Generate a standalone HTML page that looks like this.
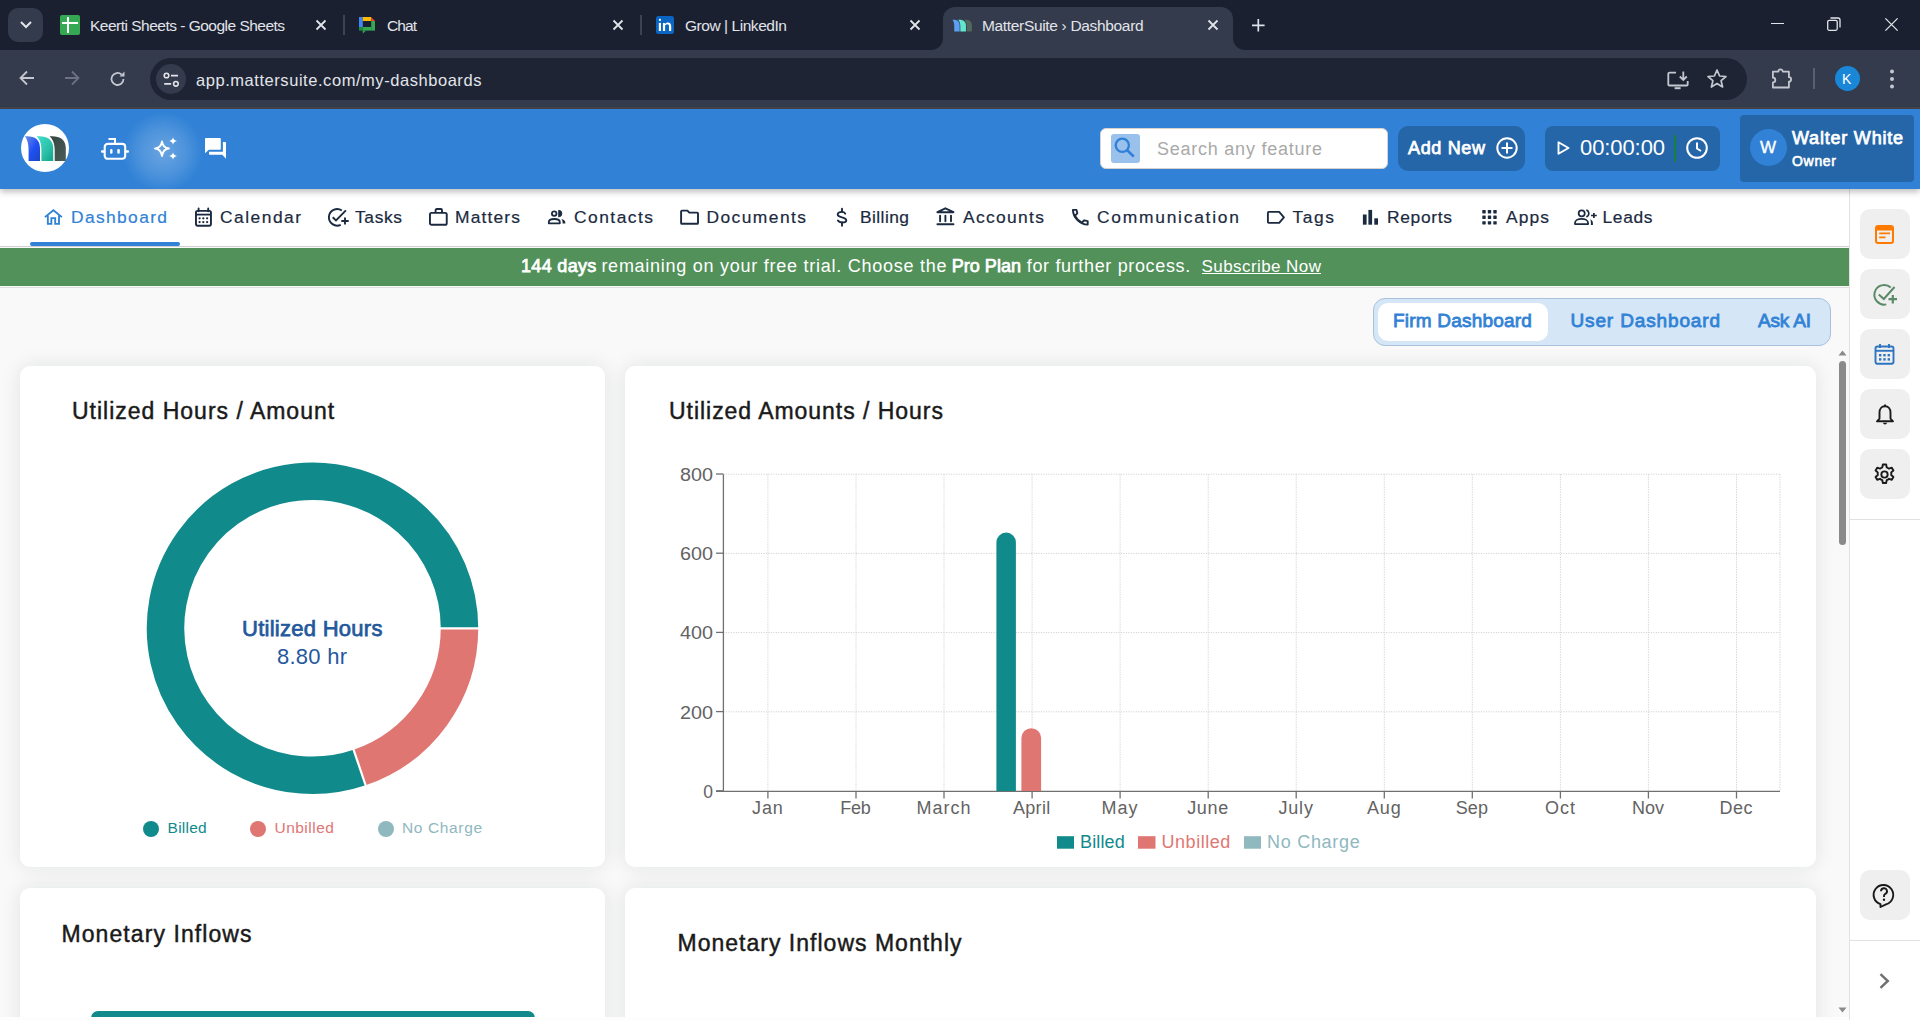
<!DOCTYPE html>
<html><head><meta charset="utf-8">
<style>
*{margin:0;padding:0;box-sizing:border-box}
html,body{width:1920px;height:1020px;overflow:hidden;background:#f9f9f9;font-family:"Liberation Sans",sans-serif}
.a{position:absolute}
.t{position:absolute;white-space:nowrap;line-height:1}
svg{position:absolute;overflow:visible}
#strip{left:0;top:0;width:1920px;height:50px;background:#1a2030}
#toolbar{left:0;top:50px;width:1920px;height:60px;background:#333b4c}
#url{left:150px;top:58px;width:1597px;height:42px;border-radius:21px;background:#1e2434}
.ct{color:#e2e4ea;font-size:15.5px}
</style></head><body>
<!-- ============ CHROME TAB STRIP ============ -->
<div id="strip" class="a"></div>
<div class="a" style="left:8px;top:8px;width:35px;height:34px;border-radius:10px;background:#333b4c"></div>
<svg style="left:19px;top:20px" width="14" height="10"><path d="M2 2 L7 7 L12 2" stroke="#e2e4ea" stroke-width="2" fill="none"/></svg>

<!-- tab1 -->
<div class="a" style="left:60px;top:15px;width:20px;height:20px;border-radius:2px;background:#34a853"></div>
<div class="a" style="left:62.4px;top:22px;width:15.2px;height:2.1px;background:#fff"></div>
<div class="a" style="left:67.2px;top:17.3px;width:2px;height:15.3px;background:#fff"></div>
<div class="t ct" style="--w:195;letter-spacing:-0.51px;left:90px;top:18px">Keerti Sheets - Google Sheets</div>
<svg style="left:315.5px;top:20px" width="10" height="10"><path d="M0.5 0.5L9.5 9.5M9.5 0.5L0.5 9.5" stroke="#e2e4ea" stroke-width="1.8"/></svg>
<div class="a" style="left:343px;top:15px;width:2px;height:20px;background:#3c4454"></div>

<!-- tab2 chat -->
<svg style="left:359px;top:17px" width="17" height="17" viewBox="0 0 17 17"><rect x="0" y="0" width="3.8" height="10" fill="#4285f4"/><rect x="0" y="10" width="3.8" height="3.6" fill="#1e8e3e"/><rect x="3.8" y="0" width="8.4" height="4" fill="#fbbc04"/><path d="M12.2 0L16 4H12.2z" fill="#ea4335"/><rect x="12.2" y="4" width="3.8" height="9.6" fill="#34a853"/><rect x="3.8" y="10" width="8.4" height="3.6" fill="#34a853"/><path d="M3.6 13.5L3.9 16.6L7 13.5z" fill="#34a853"/></svg>
<div class="t ct" style="--w:30;letter-spacing:-0.92px;left:387px;top:18px">Chat</div>
<svg style="left:612.5px;top:20px" width="10" height="10"><path d="M0.5 0.5L9.5 9.5M9.5 0.5L0.5 9.5" stroke="#e2e4ea" stroke-width="1.8"/></svg>
<div class="a" style="left:640px;top:15px;width:2px;height:20px;background:#3c4454"></div>

<!-- tab3 linkedin -->
<div class="a" style="left:656px;top:16px;width:18px;height:18px;border-radius:2.5px;background:#0a66c2"></div>
<svg style="left:656px;top:16px" width="18" height="18" viewBox="0 0 18 18"><rect x="2.8" y="2.8" width="2.2" height="2.3" rx="1" fill="#fff"/><rect x="2.8" y="6.9" width="2.2" height="8.1" fill="#fff"/><path d="M6.9 15V6.9H9V8C9.6 7 10.6 6.4 12 6.4C14 6.4 15.2 7.6 15.2 10V15H13V10.4C13 9 12.4 8.3 11.2 8.3C9.9 8.3 9.1 9.2 9.1 10.6V15z" fill="#fff"/></svg>
<div class="t ct" style="--w:102;letter-spacing:-0.45px;left:685px;top:18px">Grow | LinkedIn</div>
<svg style="left:909.5px;top:20px" width="10" height="10"><path d="M0.5 0.5L9.5 9.5M9.5 0.5L0.5 9.5" stroke="#e2e4ea" stroke-width="1.8"/></svg>

<!-- active tab -->
<div class="a" style="left:943px;top:7px;width:290px;height:50px;border-radius:12px 12px 0 0;background:#333b4c"></div>
<div class="a" style="left:931px;top:38px;width:12px;height:12px;background:#333b4c"></div>
<div class="a" style="left:919px;top:26px;width:24px;height:24px;border-radius:12px;background:#1a2030"></div>
<div class="a" style="left:1233px;top:38px;width:12px;height:12px;background:#333b4c"></div>
<div class="a" style="left:1233px;top:26px;width:24px;height:24px;border-radius:12px;background:#1a2030"></div>
<svg style="left:0;top:0" width="1000" height="40" viewBox="0 0 1000 40"><g transform="translate(952.4 19.6) scale(0.475) translate(-24.7 -136)">
<path d="M24.7 136.3 C34 135.5 40 139 40 148 V161 H28.6 V150 C28.6 143 27 139 24.7 136.3z" fill="#5c9ff2"/>
<path d="M36.5 136.3 C46 135.5 53.2 139 53.2 148 V161 H41.4 V150 C41.4 143 39.5 139 36.5 136.3z" fill="#62e6cf"/>
<path d="M49.5 136.3 C59 135.5 65.8 139 65.8 148 V161 H54.7 V150 C54.7 143 52.5 139 49.5 136.3z" fill="#50685f"/></g></svg>
<div class="t ct" style="--w:161.6;letter-spacing:-0.33px;left:982px;top:18px">MatterSuite › Dashboard</div>
<svg style="left:1207.5px;top:20px" width="10" height="10"><path d="M0.5 0.5L9.5 9.5M9.5 0.5L0.5 9.5" stroke="#e2e4ea" stroke-width="1.8"/></svg>
<svg style="left:1251.8px;top:18.8px" width="12.6" height="12.6"><path d="M6.3 0v12.6M0 6.3h12.6" stroke="#dde1ec" stroke-width="1.7"/></svg>

<!-- window controls -->
<div class="a" style="left:1771px;top:22.9px;width:13px;height:1.3px;background:#e2e4ea"></div>
<svg style="left:1826.8px;top:17.2px" width="14" height="14"><rect x="0.7" y="3.3" width="9.5" height="10" rx="1.5" stroke="#e2e4ea" stroke-width="1.3" fill="none"/><path d="M3.5 1h7.5a2 2 0 0 1 2 2v7.5" stroke="#e2e4ea" stroke-width="1.3" fill="none"/></svg>
<svg style="left:1884.7px;top:17.9px" width="13" height="13"><path d="M0.4 0.4L12.6 12.6M12.6 0.4L0.4 12.6" stroke="#e2e4ea" stroke-width="1.3"/></svg>

<!-- ============ TOOLBAR ============ -->
<div id="toolbar" class="a"></div>
<div id="url" class="a"></div>
<div class="a" style="left:0;top:107.2px;width:1920px;height:1.8px;background:#454548"></div>
<svg style="left:19px;top:70px" width="16" height="16"><path d="M15 8H2M8 1.5L1.5 8L8 14.5" stroke="#c4c7cf" stroke-width="1.8" fill="none"/></svg>
<svg style="left:64px;top:70px" width="16" height="16"><path d="M1 8H14M8 1.5L14.5 8L8 14.5" stroke="#6c7282" stroke-width="1.8" fill="none"/></svg>
<svg style="left:110px;top:71px" width="16" height="16"><path d="M13.5 8A6 6 0 1 1 11.5 3.5" stroke="#c4c7cf" stroke-width="1.8" fill="none"/><path d="M14.5 0.5v5h-5z" fill="#c4c7cf"/></svg>
<div class="a" style="left:156px;top:64px;width:30px;height:30px;border-radius:15px;background:#333b4c"></div>
<svg style="left:163px;top:71.6px" width="18" height="16"><circle cx="3.5" cy="3.5" r="2.3" stroke="#e2e4ea" stroke-width="1.6" fill="none"/><path d="M8 3.6h7M1.2 11.8h7" stroke="#e2e4ea" stroke-width="1.7"/><circle cx="12.9" cy="11.8" r="2.3" stroke="#e2e4ea" stroke-width="1.6" fill="none"/></svg>
<div class="t" style="--w:285.5;letter-spacing:0.55px;left:196px;top:71.7px;font-size:16.5px;color:#e2e4ea">app.mattersuite.com/my-dashboards</div>

<!-- right toolbar icons -->
<svg style="left:1666px;top:68px" width="24" height="22" viewBox="0 0 24 22"><path d="M10 4.6H3.5Q2.3 4.6 2.3 5.8V16.4Q2.3 17.5 3.5 17.5H20.6Q21.7 17.5 21.7 16.4V13" stroke="#c4c7cf" stroke-width="1.8" fill="none"/><path d="M8.6 20.2H14.6" stroke="#c4c7cf" stroke-width="2"/><path d="M17.3 3.5V11.8M13.8 8.5L17.3 12L20.8 8.5" stroke="#c4c7cf" stroke-width="1.8" fill="none"/></svg>
<svg style="left:1706px;top:68px" width="22" height="22"><path d="M11 2l2.6 6 6.4.5-4.9 4.2 1.5 6.3L11 15.6 5.4 19l1.5-6.3L2 8.5 8.4 8z" stroke="#c4c7cf" stroke-width="1.7" fill="none" stroke-linejoin="round"/></svg>
<svg style="left:1770px;top:67px" width="24" height="23" viewBox="0 0 24 23"><path d="M2.9 4.6H8.4A2.2 2.2 0 0 1 12.8 4.6H18.9V10.2A2.2 2.2 0 0 1 18.9 14.6V20.5H2.9V15.5A2.4 2.4 0 0 0 2.9 10.7z" stroke="#c4c7cf" stroke-width="1.8" fill="none" stroke-linejoin="round"/></svg>
<div class="a" style="left:1813px;top:68px;width:1.5px;height:21px;background:#5a6070"></div>
<div class="a" style="left:1835px;top:66px;width:25px;height:25px;border-radius:13px;background:#1a86d8"></div>
<div class="t" style="left:1842px;top:72px;font-size:14px;color:#fff">K</div>
<svg style="left:1889px;top:69px" width="6" height="20"><circle cx="3" cy="2.5" r="2" fill="#c4c7cf"/><circle cx="3" cy="10" r="2" fill="#c4c7cf"/><circle cx="3" cy="17.5" r="2" fill="#c4c7cf"/></svg>

<!-- ============ APP HEADER ============ -->
<div class="a" style="left:0;top:109px;width:1920px;height:80px;background:#3182d6;box-shadow:0 3px 6px rgba(0,0,0,0.25);z-index:2"></div>
<div class="a" style="z-index:3;left:0;top:0;width:0;height:0">
<!-- logo -->
<div class="a" style="left:21px;top:124px;width:48px;height:48px;border-radius:24px;background:#fff"></div>
<svg style="left:0;top:0" width="90" height="180" viewBox="0 0 90 180">
<defs>
<linearGradient id="lg1" x1="0" y1="0" x2="1" y2="1"><stop offset="0" stop-color="#6f8fe0"/><stop offset="0.55" stop-color="#1f4ff5"/><stop offset="1" stop-color="#1b48c0"/></linearGradient>
<linearGradient id="lg2" x1="0" y1="0" x2="1" y2="1"><stop offset="0" stop-color="#40e0cc"/><stop offset="0.6" stop-color="#2cc0a8"/><stop offset="1" stop-color="#12a088"/></linearGradient>
<linearGradient id="lg3" x1="0" y1="0" x2="1" y2="1"><stop offset="0" stop-color="#34443f"/><stop offset="1" stop-color="#4c5c58"/></linearGradient>
</defs>
<path d="M24.7 136.3 C34 135.5 40 139 40 148 V161 H28.6 V150 C28.6 143 27 139 24.7 136.3z" fill="url(#lg1)"/>
<path d="M36.5 136.3 C46 135.5 53.2 139 53.2 148 V161 H41.4 V150 C41.4 143 39.5 139 36.5 136.3z" fill="url(#lg2)"/>
<path d="M49.5 136.3 C59 135.5 65.8 139 65.8 148 V161 H54.7 V150 C54.7 143 52.5 139 49.5 136.3z" fill="url(#lg3)"/>
</svg>
<!-- robot -->
<svg style="left:101px;top:137px" width="28" height="24" viewBox="0 0 28 24"><rect x="3.7" y="6.9" width="20.5" height="14.9" rx="3" stroke="#fff" stroke-width="2.1" fill="none"/><path d="M8.2 2.1H14V6" stroke="#fff" stroke-width="2" fill="none" stroke-linecap="round"/><path d="M1.2 14.5h1.8M25 14.5h1.8" stroke="#fff" stroke-width="2.6" stroke-linecap="round"/><rect x="9.1" y="12" width="2.4" height="4.8" rx="1.2" fill="#fff"/><rect x="16.3" y="12" width="2.5" height="4.8" rx="1.2" fill="#fff"/></svg>
<!-- sparkle glow -->
<div class="a" style="left:123px;top:112px;width:80px;height:80px;border-radius:40px;background:radial-gradient(circle,rgba(255,255,255,0.27) 0%,rgba(255,255,255,0.14) 40%,rgba(255,255,255,0) 70%)"></div>
<svg style="left:154px;top:137px" width="24" height="24" viewBox="0 0 24 24"><path d="M8 4.5 Q9 11 15 11.5 Q9 12 8 19 Q7 12 1 11.5 Q7 11 8 4.5z" stroke="#fff" stroke-width="1.8" fill="none" stroke-linejoin="round"/><path d="M19 0.2 Q19.6 3.4 23 4 Q19.6 4.6 19 7.8 Q18.4 4.6 15 4 Q18.4 3.4 19 0.2z" fill="#fff"/><path d="M19 15.2 Q19.6 18.4 23 19 Q19.6 19.6 19 22.8 Q18.4 19.6 15 19 Q18.4 18.4 19 15.2z" fill="#fff"/></svg>
<!-- chat -->
<svg style="left:204px;top:138px" width="23" height="22" viewBox="0 0 23 22"><path d="M1 0.9Q1 0.1 1.8 0.1H16Q16.8 0.1 16.8 0.9V10.9Q16.8 11.7 16 11.7H4.8L1 15.3z" fill="#fff"/><path d="M18.9 4H21.2Q22 4 22 4.8V20.8L18.2 16.7H5.8Q5 16.7 5 15.9V13.8H18.9z" fill="#fff"/></svg>

<!-- search -->
<div class="a" style="left:1100px;top:128px;width:288px;height:40.7px;border-radius:6px;background:#fff;border:1px solid #d8d2cc"></div>
<div class="a" style="left:1111px;top:134px;width:29px;height:29px;border-radius:3px;background:#99c1eb"></div>
<svg style="left:1114px;top:137px" width="22" height="22" viewBox="0 0 22 22"><circle cx="8.3" cy="8.3" r="6.6" stroke="#2e80d8" stroke-width="2.3" fill="none"/><path d="M13.2 13.2L19.8 19.6" stroke="#2e80d8" stroke-width="2.7"/></svg>
<div class="t" style="--w:165;letter-spacing:0.76px;left:1157px;top:140px;font-size:18px;color:#a9a9a9">Search any feature</div>

<!-- add new -->
<div class="a" style="left:1398px;top:126px;width:127px;height:45px;border-radius:10px;background:#2566a8"></div>
<div class="t" style="--w:77;letter-spacing:0.66px;left:1408px;top:139px;font-size:18px;color:#fff;-webkit-text-stroke:0.75px #fff">Add New</div>
<svg style="left:1496px;top:137px" width="22" height="22" viewBox="0 0 22 22"><circle cx="11" cy="11" r="9.7" stroke="#fff" stroke-width="2" fill="none"/><path d="M11 5.5v11M5.5 11h11" stroke="#fff" stroke-width="2"/></svg>

<!-- timer -->
<div class="a" style="left:1545px;top:126px;width:175px;height:45px;border-radius:8px;background:#2566a8"></div>
<svg style="left:1557px;top:141px" width="13" height="14" viewBox="0 0 13 14"><path d="M1.5 1.2L11.5 7L1.5 12.8z" stroke="#fff" stroke-width="1.9" fill="none" stroke-linejoin="round"/></svg>
<div class="t" style="--w:85;letter-spacing:-0.09px;left:1580px;top:137px;font-size:22px;color:#fff">00:00:00</div>
<div class="a" style="left:1674px;top:135px;width:1.5px;height:27px;background:#17803a"></div>
<svg style="left:1686px;top:137px" width="22" height="22" viewBox="0 0 22 22"><circle cx="11" cy="11" r="9.8" stroke="#fff" stroke-width="2" fill="none"/><path d="M11 5.5V11.5l4 2.5" stroke="#fff" stroke-width="2" fill="none"/></svg>

<!-- user -->
<div class="a" style="left:1740px;top:115px;width:174px;height:67px;border-radius:4px;background:#2566a8"></div>
<div class="a" style="left:1750px;top:129px;width:37px;height:37px;border-radius:19px;background:#3182d6"></div>
<div class="t" style="--w:16.3;letter-spacing:0.25px;left:1760px;top:139px;font-size:17px;color:#fff;-webkit-text-stroke:0.4px #fff">W</div>
<div class="t" style="--w:111;letter-spacing:0.79px;left:1792px;top:129px;font-size:18px;color:#fff;-webkit-text-stroke:0.75px #fff">Walter White</div>
<div class="t" style="--w:44;letter-spacing:0.69px;left:1792px;top:154px;font-size:14px;color:#fff;-webkit-text-stroke:0.6px #fff">Owner</div>
</div>

<!-- ============ NAV ============ -->
<div class="a" style="left:0;top:189px;width:1849px;height:58px;background:#fff;border-bottom:1.5px solid #d0d0d0"></div>
<div class="a" style="left:30px;top:242px;width:150px;height:3.5px;border-radius:2px;background:#3182d6"></div>
<!-- home -->
<svg style="left:44px;top:209px" width="19" height="17" viewBox="0 0 19 17"><path d="M0.9 8.1L9.4 1.2L17.9 8.1M3.85 6.6V14.8H7.35V9.15H11.2V14.8H15V6.6" stroke="#3182d6" stroke-width="1.85" fill="none" stroke-linejoin="miter"/></svg>
<div class="t" style="--w:96;letter-spacing:1.37px;left:71px;top:208.5px;font-size:17.4px;color:#3182d6;-webkit-text-stroke:0.2px #3182d6">Dashboard</div>
<!-- calendar -->
<svg style="left:194px;top:208px" width="19" height="19" viewBox="0 0 19 19"><rect x="1.95" y="2.9" width="15" height="14.8" rx="1.6" stroke="#1b2a40" stroke-width="1.9" fill="none"/><path d="M1.95 6.6H16.95" stroke="#1b2a40" stroke-width="1.8"/><path d="M4.6 0.4V3.2M14.2 0.4V3.2" stroke="#1b2a40" stroke-width="1.9" stroke-linecap="round"/><g fill="#1b2a40"><circle cx="5.6" cy="10.3" r="1.15"/><circle cx="9.3" cy="10.3" r="1.15"/><circle cx="13.1" cy="10.3" r="1.15"/><circle cx="5.6" cy="14.1" r="1.15"/><circle cx="9.3" cy="14.1" r="1.15"/><circle cx="13.1" cy="14.1" r="1.15"/></g></svg>
<div class="t" style="--w:81;letter-spacing:1.49px;left:220px;top:208.5px;font-size:17.4px;color:#1b2a40;-webkit-text-stroke:0.2px #1b2a40">Calendar</div>
<!-- tasks -->
<svg style="left:327px;top:208px" width="23" height="19" viewBox="0 0 23 19"><path d="M14.84 2.42A8.3 8.3 0 1 0 13.71 16.82" stroke="#1b2a40" stroke-width="1.9" fill="none"/><path d="M5.7 9.2L9 12.4L18.9 2.4" stroke="#1b2a40" stroke-width="1.9" fill="none"/><path d="M18 9.4v7.2M14.3 13h7.4" stroke="#1b2a40" stroke-width="1.9"/></svg>
<div class="t" style="--w:47;letter-spacing:0.64px;left:355px;top:208.5px;font-size:17.4px;color:#1b2a40;-webkit-text-stroke:0.2px #1b2a40">Tasks</div>
<!-- matters -->
<svg style="left:428px;top:208px" width="21" height="19" viewBox="0 0 21 19"><rect x="1.95" y="4.85" width="16.8" height="11.9" rx="1.6" stroke="#1b2a40" stroke-width="1.9" fill="none"/><path d="M7.6 4.85V2.3Q7.6 1.05 8.8 1.05H12.8Q14 1.05 14 2.3V4.85" stroke="#1b2a40" stroke-width="1.9" fill="none"/></svg>
<div class="t" style="--w:65;letter-spacing:1.17px;left:455px;top:208.5px;font-size:17.4px;color:#1b2a40;-webkit-text-stroke:0.2px #1b2a40">Matters</div>
<!-- contacts -->
<svg style="left:547px;top:209px" width="20" height="16" viewBox="0 0 20 16"><circle cx="7.2" cy="4.6" r="2.3" stroke="#1b2a40" stroke-width="1.8" fill="none"/><path d="M11.6 1.3A3.3 3.3 0 0 1 11.6 7.9z" fill="#1b2a40" stroke="#1b2a40" stroke-width="0.8"/><path d="M1.8 14.3V13.3C1.8 10.9 4.6 10 7.3 10S12.8 10.9 12.8 13.3V14.3z" stroke="#1b2a40" stroke-width="1.8" fill="none" stroke-linejoin="round"/><path d="M14.4 10.1C16.7 10.6 18.3 11.8 18.3 13.4V14.6H15.6V13.4C15.6 12 15.2 10.9 14.4 10.1z" fill="#1b2a40"/></svg>
<div class="t" style="--w:79;letter-spacing:1.48px;left:574px;top:208.5px;font-size:17.4px;color:#1b2a40;-webkit-text-stroke:0.2px #1b2a40">Contacts</div>
<!-- documents -->
<svg style="left:680px;top:209px" width="20" height="17" viewBox="0 0 20 17"><path d="M2 1.6H7.4L9.3 3.6H17.1Q18 3.6 18 4.5V13.9Q18 14.8 17.1 14.8H2Q1.1 14.8 1.1 13.9V2.5Q1.1 1.6 2 1.6z" stroke="#1b2a40" stroke-width="1.9" fill="none" stroke-linejoin="round"/></svg>
<div class="t" style="--w:99.5;letter-spacing:1.44px;left:706.5px;top:208.5px;font-size:17.4px;color:#1b2a40;-webkit-text-stroke:0.2px #1b2a40">Documents</div>
<!-- billing -->
<svg style="left:835px;top:207px" width="14" height="21" viewBox="0 0 14 21"><path d="M10.2 6.7C9.6 5.5 8.5 4.9 7 4.9C4.6 4.9 2.7 6 2.7 7.6C2.7 9.2 4.5 9.8 7 10.4C9.5 11 11.3 11.8 11.3 13.4C11.3 14.8 9.5 15.5 7 15.5C5 15.5 3.6 14.8 2.9 13.6" stroke="#1b2a40" stroke-width="1.9" fill="none" stroke-linecap="round"/><path d="M7 1.8V4.9M7 15.5V18.8" stroke="#1b2a40" stroke-width="1.9" stroke-linecap="round"/></svg>
<div class="t" style="--w:49;letter-spacing:0.43px;left:860px;top:208.5px;font-size:17.4px;color:#1b2a40;-webkit-text-stroke:0.2px #1b2a40">Billing</div>
<!-- accounts -->
<svg style="left:936px;top:207px" width="19" height="20" viewBox="0 0 19 20"><path d="M1.4 5.2L9.4 1.3L17.5 5.2z" stroke="#1b2a40" stroke-width="1.9" fill="none" stroke-linejoin="round"/><path d="M1.4 17.3H17.5M4.1 8.6V14.2M9.4 8.6V14.2M15 8.6V14.2" stroke="#1b2a40" stroke-width="1.9" stroke-linecap="round"/></svg>
<div class="t" style="--w:81;letter-spacing:1.35px;left:963px;top:208.5px;font-size:17.4px;color:#1b2a40;-webkit-text-stroke:0.2px #1b2a40">Accounts</div>
<!-- communication -->
<svg style="left:1071px;top:208px" width="20" height="20" viewBox="0 0 20 20"><path d="M1.9 1.9H5.5L6.3 5.3L3.9 7.8C5.4 10.7 7.9 13.2 10.8 14.7L13.3 12.3L16.7 13.2V16.6C8.8 16.3 2.2 9.8 1.9 1.9z" stroke="#1b2a40" stroke-width="1.9" fill="none" stroke-linejoin="round"/></svg>
<div class="t" style="--w:142;letter-spacing:1.76px;left:1097px;top:208.5px;font-size:17.4px;color:#1b2a40;-webkit-text-stroke:0.2px #1b2a40">Communication</div>
<!-- tags -->
<svg style="left:1266px;top:210px" width="19" height="15" viewBox="0 0 19 15"><path d="M2.8 1.8H13.2L17.9 7.3L13.2 12.9H2.8Q1.9 12.9 1.9 12V2.7Q1.9 1.8 2.8 1.8z" stroke="#1b2a40" stroke-width="1.85" fill="none" stroke-linejoin="round"/></svg>
<div class="t" style="--w:41.5;letter-spacing:1.59px;left:1292.5px;top:208.5px;font-size:17.4px;color:#1b2a40;-webkit-text-stroke:0.2px #1b2a40">Tags</div>
<!-- reports -->
<svg style="left:1362px;top:209px" width="17" height="17" viewBox="0 0 17 17"><rect x="0.9" y="5.5" width="3.7" height="10.2" fill="#1b2a40"/><rect x="6.4" y="0.9" width="3.7" height="14.8" fill="#1b2a40"/><rect x="12.3" y="9.3" width="3.7" height="6.4" fill="#1b2a40"/></svg>
<div class="t" style="--w:65;letter-spacing:0.68px;left:1387px;top:208.5px;font-size:17.4px;color:#1b2a40;-webkit-text-stroke:0.2px #1b2a40">Reports</div>
<!-- apps -->
<svg style="left:1481.5px;top:209.8px" width="16" height="16" viewBox="0 0 16 16"><g fill="#1b2a40"><rect x="0.3" y="0.1" width="3.4" height="3.3" rx="0.4"/><rect x="5.8" y="0.1" width="3.4" height="3.3" rx="0.4"/><rect x="11.3" y="0.1" width="3.4" height="3.3" rx="0.4"/><rect x="0.3" y="5.6" width="3.4" height="3.3" rx="0.4"/><rect x="5.8" y="5.6" width="3.4" height="3.3" rx="0.4"/><rect x="11.3" y="5.6" width="3.4" height="3.3" rx="0.4"/><rect x="0.3" y="11.2" width="3.4" height="3.3" rx="0.4"/><rect x="5.8" y="11.2" width="3.4" height="3.3" rx="0.4"/><rect x="11.3" y="11.2" width="3.4" height="3.3" rx="0.4"/></g></svg>
<div class="t" style="--w:43;letter-spacing:1.12px;left:1506px;top:208.5px;font-size:17.4px;color:#1b2a40;-webkit-text-stroke:0.2px #1b2a40">Apps</div>
<!-- leads -->
<svg style="left:1573px;top:208px" width="25" height="18" viewBox="0 0 25 18"><circle cx="8.7" cy="5.35" r="3.05" stroke="#1b2a40" stroke-width="1.75" fill="none"/><path d="M13.3 2.1A3.5 3.5 0 0 1 13.3 8.8" stroke="#1b2a40" stroke-width="1.6" fill="none"/><path d="M2 16V15C2 12.4 5 10.8 8.55 10.8S15.1 12.4 15.1 15V16z" stroke="#1b2a40" stroke-width="1.75" fill="none" stroke-linejoin="round"/><path d="M17.2 11.3C18.8 12.1 19.9 13.4 19.9 15V16.9H17.9V15C17.9 13.6 17.7 12.3 17.2 11.3z" fill="#1b2a40"/><path d="M20.9 5v5M18.05 7.5h5.7" stroke="#1b2a40" stroke-width="1.7"/></svg>
<div class="t" style="--w:50;letter-spacing:0.65px;left:1602.5px;top:208.5px;font-size:17.4px;color:#1b2a40;-webkit-text-stroke:0.2px #1b2a40">Leads</div>

<!-- ============ BANNER ============ -->
<div class="a" style="left:0;top:248px;width:1849px;height:38px;background:#52915a"></div>
<div class="a" style="left:0;top:287px;width:1849px;height:1px;background:#dedede"></div>
<div class="t" style="--w:75.4;letter-spacing:0.33px;left:521px;top:257px;font-size:18px;color:#fff;-webkit-text-stroke:0.75px #fff">144 days</div>
<div class="t" style="--w:345;letter-spacing:0.74px;left:601.4px;top:257px;font-size:18px;color:#fff">remaining on your free trial. Choose the</div>
<div class="t" style="--w:69.3;letter-spacing:0.04px;left:951.7px;top:257px;font-size:18px;color:#fff;-webkit-text-stroke:0.75px #fff">Pro Plan</div>
<div class="t" style="--w:163.4;letter-spacing:0.65px;left:1026.8px;top:257px;font-size:18px;color:#fff">for further process.</div>
<div class="t" style="--w:119.4;letter-spacing:0.42px;left:1201.6px;top:258px;font-size:17px;color:#fff">Subscribe Now</div>
<div class="a" style="left:1201.6px;top:273px;width:119.4px;height:1.3px;background:#fff"></div>

<!-- ============ DASH TABS ============ -->
<div class="a" style="left:1373px;top:298px;width:458px;height:48px;border-radius:12px;background:#d5e6f6;border:1px solid #a9c1dc"></div>
<div class="a" style="left:1378px;top:303px;width:170px;height:38px;border-radius:10px;background:#fff"></div>
<div class="t" style="--w:139;letter-spacing:0.21px;left:1393px;top:311px;font-size:19px;color:#3182d6;-webkit-text-stroke:0.8px #3182d6">Firm Dashboard</div>
<div class="t" style="--w:149.5;letter-spacing:0.86px;left:1570.5px;top:311px;font-size:19px;color:#3182d6;-webkit-text-stroke:0.8px #3182d6">User Dashboard</div>
<div class="t" style="--w:53;letter-spacing:-0.17px;left:1758px;top:311px;font-size:19px;color:#3182d6;-webkit-text-stroke:0.8px #3182d6">Ask AI</div>

<!-- ============ CARDS ============ -->
<div class="a" style="left:20px;top:366px;width:585px;height:501px;border-radius:10px;background:#fff;box-shadow:0 0 20px rgba(20,30,40,0.1)"></div>
<div class="a" style="left:625px;top:366px;width:1191px;height:501px;border-radius:10px;background:#fff;box-shadow:0 0 20px rgba(20,30,40,0.1)"></div>
<div class="a" style="left:20px;top:888px;width:585px;height:200px;border-radius:10px;background:#fff;box-shadow:0 0 20px rgba(20,30,40,0.1)"></div>
<div class="a" style="left:625px;top:888px;width:1191px;height:200px;border-radius:10px;background:#fff;box-shadow:0 0 20px rgba(20,30,40,0.1)"></div>

<div class="t" style="--w:262;letter-spacing:0.99px;left:72px;top:400px;font-size:23px;color:#1a1a1a;-webkit-text-stroke:0.45px #1a1a1a">Utilized Hours / Amount</div>
<div class="t" style="--w:274;letter-spacing:0.96px;left:669px;top:400px;font-size:23px;color:#1a1a1a;-webkit-text-stroke:0.45px #1a1a1a">Utilized Amounts / Hours</div>
<div class="t" style="--w:190;letter-spacing:1.08px;left:61.5px;top:923px;font-size:23px;color:#1a1a1a;-webkit-text-stroke:0.45px #1a1a1a">Monetary Inflows</div>
<div class="t" style="--w:284;letter-spacing:1.01px;left:677.5px;top:932px;font-size:23px;color:#1a1a1a;-webkit-text-stroke:0.45px #1a1a1a">Monetary Inflows Monthly</div>
<div class="a" style="left:91px;top:1011px;width:443.5px;height:20px;border-radius:7px 7px 0 0;background:#128a8c"></div>

<!-- ============ CHARTS ============ -->
<svg style="left:0;top:0" width="1920" height="1020" viewBox="0 0 1920 1020">
<path d="M359.63 767.54 A147.0 147.0 0 1 1 459.50 628.30" stroke="#118a8c" stroke-width="37.5" fill="none"/>
<path d="M459.50 628.30 A147.0 147.0 0 0 1 359.63 767.54" stroke="#e07672" stroke-width="37.5" fill="none"/>
<path d="M439.75 628.30 L479.25 628.30" stroke="#fff" stroke-width="2.2"/><path d="M353.30 748.83 L365.96 786.25" stroke="#fff" stroke-width="2.2"/>
<circle cx="151" cy="829" r="8" fill="#118a8c"/>
<circle cx="258" cy="829" r="8" fill="#e07672"/>
<circle cx="386" cy="829" r="8" fill="#8fb8bf"/>
<path d="M767.9 474.2 V791.0" stroke="#d2d2d2" stroke-width="1" stroke-dasharray="1.2 1.3"/>
<path d="M767.9 791.0 V798.5" stroke="#707070" stroke-width="1.3"/>
<path d="M856.0 474.2 V791.0" stroke="#d2d2d2" stroke-width="1" stroke-dasharray="1.2 1.3"/>
<path d="M856.0 791.0 V798.5" stroke="#707070" stroke-width="1.3"/>
<path d="M944.0 474.2 V791.0" stroke="#d2d2d2" stroke-width="1" stroke-dasharray="1.2 1.3"/>
<path d="M944.0 791.0 V798.5" stroke="#707070" stroke-width="1.3"/>
<path d="M1032.1 474.2 V791.0" stroke="#d2d2d2" stroke-width="1" stroke-dasharray="1.2 1.3"/>
<path d="M1032.1 791.0 V798.5" stroke="#707070" stroke-width="1.3"/>
<path d="M1120.1 474.2 V791.0" stroke="#d2d2d2" stroke-width="1" stroke-dasharray="1.2 1.3"/>
<path d="M1120.1 791.0 V798.5" stroke="#707070" stroke-width="1.3"/>
<path d="M1208.2 474.2 V791.0" stroke="#d2d2d2" stroke-width="1" stroke-dasharray="1.2 1.3"/>
<path d="M1208.2 791.0 V798.5" stroke="#707070" stroke-width="1.3"/>
<path d="M1296.2 474.2 V791.0" stroke="#d2d2d2" stroke-width="1" stroke-dasharray="1.2 1.3"/>
<path d="M1296.2 791.0 V798.5" stroke="#707070" stroke-width="1.3"/>
<path d="M1384.3 474.2 V791.0" stroke="#d2d2d2" stroke-width="1" stroke-dasharray="1.2 1.3"/>
<path d="M1384.3 791.0 V798.5" stroke="#707070" stroke-width="1.3"/>
<path d="M1472.3 474.2 V791.0" stroke="#d2d2d2" stroke-width="1" stroke-dasharray="1.2 1.3"/>
<path d="M1472.3 791.0 V798.5" stroke="#707070" stroke-width="1.3"/>
<path d="M1560.4 474.2 V791.0" stroke="#d2d2d2" stroke-width="1" stroke-dasharray="1.2 1.3"/>
<path d="M1560.4 791.0 V798.5" stroke="#707070" stroke-width="1.3"/>
<path d="M1648.4 474.2 V791.0" stroke="#d2d2d2" stroke-width="1" stroke-dasharray="1.2 1.3"/>
<path d="M1648.4 791.0 V798.5" stroke="#707070" stroke-width="1.3"/>
<path d="M1736.5 474.2 V791.0" stroke="#d2d2d2" stroke-width="1" stroke-dasharray="1.2 1.3"/>
<path d="M1736.5 791.0 V798.5" stroke="#707070" stroke-width="1.3"/>
<path d="M1780.0 474.2 V791.0" stroke="#d2d2d2" stroke-width="1" stroke-dasharray="1.2 1.3"/>
<path d="M723.4 474.2 H1780.0" stroke="#d2d2d2" stroke-width="1" stroke-dasharray="1.2 1.3"/>
<path d="M723.4 553.4 H1780.0" stroke="#d2d2d2" stroke-width="1" stroke-dasharray="1.2 1.3"/>
<path d="M723.4 632.6 H1780.0" stroke="#d2d2d2" stroke-width="1" stroke-dasharray="1.2 1.3"/>
<path d="M723.4 711.8 H1780.0" stroke="#d2d2d2" stroke-width="1" stroke-dasharray="1.2 1.3"/>
<path d="M716 474.0 H723.4" stroke="#707070" stroke-width="1.3"/>
<path d="M716 553.2 H723.4" stroke="#707070" stroke-width="1.3"/>
<path d="M716 632.4 H723.4" stroke="#707070" stroke-width="1.3"/>
<path d="M716 711.6 H723.4" stroke="#707070" stroke-width="1.3"/>
<path d="M716 790.8 H723.4" stroke="#707070" stroke-width="1.3"/>
<path d="M723.4 474.2 V791.0" stroke="#707070" stroke-width="1.3"/>
<path d="M716.0 791.3 H1780.0" stroke="#707070" stroke-width="1.3"/>
<path d="M996.4 791 V542.3 A9.75 9.75 0 0 1 1015.9 542.3 V791z" fill="#118a8c"/>
<path d="M1021.4 791 V738 A9.85 9.85 0 0 1 1041.1 738 V791z" fill="#e07672"/>
<text x="713" y="481.0" text-anchor="end" font-size="17.5" fill="#636363" textLength="33" lengthAdjust="spacingAndGlyphs">800</text>
<text x="713" y="560.2" text-anchor="end" font-size="17.5" fill="#636363" textLength="33" lengthAdjust="spacingAndGlyphs">600</text>
<text x="713" y="639.4" text-anchor="end" font-size="17.5" fill="#636363" textLength="33" lengthAdjust="spacingAndGlyphs">400</text>
<text x="713" y="718.6" text-anchor="end" font-size="17.5" fill="#636363" textLength="33" lengthAdjust="spacingAndGlyphs">200</text>
<text x="713" y="797.8" text-anchor="end" font-size="17.5" fill="#636363">0</text>
<text x="767.4" y="814" text-anchor="middle" font-size="18" fill="#636363" textLength="30.8" lengthAdjust="spacing">Jan</text>
<text x="855.5" y="814" text-anchor="middle" font-size="18" fill="#636363" textLength="30.3" lengthAdjust="spacing">Feb</text>
<text x="943.5" y="814" text-anchor="middle" font-size="18" fill="#636363" textLength="53.8" lengthAdjust="spacing">March</text>
<text x="1031.6" y="814" text-anchor="middle" font-size="18" fill="#636363" textLength="37.4" lengthAdjust="spacing">April</text>
<text x="1119.6" y="814" text-anchor="middle" font-size="18" fill="#636363" textLength="36.0" lengthAdjust="spacing">May</text>
<text x="1207.7" y="814" text-anchor="middle" font-size="18" fill="#636363" textLength="41.0" lengthAdjust="spacing">June</text>
<text x="1295.7" y="814" text-anchor="middle" font-size="18" fill="#636363" textLength="34.4" lengthAdjust="spacing">July</text>
<text x="1383.8" y="814" text-anchor="middle" font-size="18" fill="#636363" textLength="33.8" lengthAdjust="spacing">Aug</text>
<text x="1471.8" y="814" text-anchor="middle" font-size="18" fill="#636363" textLength="32.3" lengthAdjust="spacing">Sep</text>
<text x="1559.9" y="814" text-anchor="middle" font-size="18" fill="#636363" textLength="30.0" lengthAdjust="spacing">Oct</text>
<text x="1647.9" y="814" text-anchor="middle" font-size="18" fill="#636363" textLength="32.0" lengthAdjust="spacing">Nov</text>
<text x="1736.0" y="814" text-anchor="middle" font-size="18" fill="#636363" textLength="33.0" lengthAdjust="spacing">Dec</text>
<rect x="1057" y="836.2" width="17" height="12.5" fill="#118a8c"/>
<rect x="1138" y="836.2" width="17.5" height="12.5" fill="#e07672"/>
<rect x="1244" y="836.2" width="17" height="12.5" fill="#8fb8bf"/>
</svg>
<div class="t" style="--w:140.5;letter-spacing:0.27px;left:242px;top:618px;font-size:22px;color:#24589c;-webkit-text-stroke:0.75px #24589c">Utilized Hours</div>
<div class="t" style="--w:70;letter-spacing:0.25px;left:277px;top:646px;font-size:22px;color:#24589c">8.80 hr</div>
<div class="t" style="--w:39;letter-spacing:0.22px;left:167.6px;top:820px;font-size:15.5px;color:#118a8c">Billed</div>
<div class="t" style="--w:59.4;letter-spacing:0.48px;left:274.5px;top:820px;font-size:15.5px;color:#e07672">Unbilled</div>
<div class="t" style="--w:80;letter-spacing:0.63px;left:402px;top:820px;font-size:15.5px;color:#8fb8bf">No Charge</div>
<div class="t" style="--w:44.7;letter-spacing:0.13px;left:1080px;top:833px;font-size:18px;color:#118a8c">Billed</div>
<div class="t" style="--w:68.8;letter-spacing:0.54px;left:1161.5px;top:833px;font-size:18px;color:#e07672">Unbilled</div>
<div class="t" style="--w:92.8;letter-spacing:0.72px;left:1267px;top:833px;font-size:18px;color:#8fb8bf">No Charge</div>

<div class="a" style="left:0;top:1017px;width:1849px;height:3px;background:#fdfdfd"></div>
<!-- ============ SCROLLBAR ============ -->
<svg style="left:1838px;top:350px" width="9" height="6" viewBox="0 0 9 6"><path d="M0.5 5.5L4.5 0.5L8.5 5.5z" fill="#8a8a8a"/></svg>
<div class="a" style="left:1839px;top:361px;width:7px;height:184px;border-radius:4px;background:#8a8a8a"></div>
<svg style="left:1838px;top:1007px" width="9" height="6" viewBox="0 0 9 6"><path d="M0.5 0.5L4.5 5.5L8.5 0.5z" fill="#8a8a8a"/></svg>

<!-- ============ SIDEBAR ============ -->
<div class="a" style="left:1849px;top:189px;width:71px;height:831px;background:#fff;border-left:1px solid #e2e2e2"></div>
<div class="a" style="left:1850px;top:519px;width:70px;height:1px;background:#e2e2e2"></div>
<div class="a" style="left:1850px;top:940px;width:70px;height:1px;background:#e2e2e2"></div>
<div class="a" style="left:1860px;top:209px;width:50px;height:50px;border-radius:10px;background:#efefef"></div>
<div class="a" style="left:1860px;top:269px;width:50px;height:50px;border-radius:10px;background:#efefef"></div>
<div class="a" style="left:1860px;top:329px;width:50px;height:50px;border-radius:10px;background:#efefef"></div>
<div class="a" style="left:1860px;top:389px;width:50px;height:50px;border-radius:10px;background:#efefef"></div>
<div class="a" style="left:1860px;top:449px;width:50px;height:50px;border-radius:10px;background:#efefef"></div>
<div class="a" style="left:1860px;top:870px;width:50px;height:50px;border-radius:10px;background:#efefef"></div>
<svg style="left:1875px;top:225px" width="19" height="19" viewBox="0 0 19 19"><rect x="1" y="1" width="17" height="17" rx="2.2" stroke="#ff7a00" stroke-width="2" fill="none"/><rect x="1" y="1" width="17" height="4.5" fill="#ff7a00"/><path d="M4.2 8.3h10.8M4.2 12.4h6.3" stroke="#ff7a00" stroke-width="1.8"/></svg>
<svg style="left:1873px;top:283px" width="24" height="23" viewBox="0 0 24 23"><path d="M17.76 4.52A9.8 9.8 0 1 0 13.24 21.39" stroke="#5b8a68" stroke-width="2" fill="none"/><path d="M5.8 11.5L10.8 16L21.5 4" stroke="#5b8a68" stroke-width="2" fill="none"/><path d="M19.8 12v8.5M15.5 16.2h8.5" stroke="#5b8a68" stroke-width="2.2"/></svg>
<svg style="left:1874px;top:343px" width="21" height="22" viewBox="0 0 21 22"><rect x="1.5" y="3.5" width="18" height="17.3" rx="2" stroke="#2f74c0" stroke-width="1.9" fill="none"/><path d="M1.5 7.8h18" stroke="#2f74c0" stroke-width="1.9"/><path d="M6 1v4M15 1v4" stroke="#2f74c0" stroke-width="1.9"/><g fill="#2f74c0"><rect x="5" y="11" width="2.4" height="2.4"/><rect x="9.3" y="11" width="2.4" height="2.4"/><rect x="13.6" y="11" width="2.4" height="2.4"/><rect x="5" y="15.2" width="2.4" height="2.4"/><rect x="9.3" y="15.2" width="2.4" height="2.4"/><rect x="13.6" y="15.2" width="2.4" height="2.4"/></g></svg>
<svg style="left:1875px;top:404px" width="20" height="21" viewBox="0 0 20 21"><path d="M10 2.2c-3.5 0-5.5 2.7-5.5 6.2v6.3L2 17.3h16l-2.5-2.6V8.4c0-3.5-2-6.2-5.5-6.2z" stroke="#1a1a1a" stroke-width="1.9" fill="none" stroke-linejoin="round"/><path d="M10 0.5v1.8" stroke="#1a1a1a" stroke-width="1.9"/><path d="M8 18.8a2 1.6 0 0 0 4 0z" fill="#1a1a1a"/></svg>
<svg style="left:1873px;top:463px" width="23" height="23" viewBox="0 0 24 24"><path d="M10.3 1.5h3.4l.6 3a7.8 7.8 0 0 1 2.4 1.4l2.9-1 1.7 2.9-2.3 2a7.8 7.8 0 0 1 0 2.8l2.3 2-1.7 2.9-2.9-1a7.8 7.8 0 0 1-2.4 1.4l-.6 3h-3.4l-.6-3a7.8 7.8 0 0 1-2.4-1.4l-2.9 1-1.7-2.9 2.3-2a7.8 7.8 0 0 1 0-2.8l-2.3-2 1.7-2.9 2.9 1a7.8 7.8 0 0 1 2.4-1.4z" stroke="#1a1a1a" stroke-width="2" fill="none" stroke-linejoin="round"/><circle cx="12" cy="12" r="3.3" stroke="#1a1a1a" stroke-width="2" fill="none"/></svg>
<svg style="left:1873px;top:883px" width="22" height="25" viewBox="0 0 22 25"><path d="M7.5 21.2A9.8 9.8 0 1 1 13 21.3L7.5 24z" stroke="#1a1a1a" stroke-width="1.9" fill="none" stroke-linejoin="round"/><path d="M8 8.2a3 3 0 1 1 4.3 2.7c-1 .5-1.3 1.1-1.3 2.2v.8" stroke="#1a1a1a" stroke-width="1.9" fill="none"/><circle cx="11" cy="16.8" r="1.2" fill="#1a1a1a"/></svg>
<svg style="left:1879px;top:973px" width="11" height="16" viewBox="0 0 11 16"><path d="M1.5 1.2L8.8 8L1.5 14.8" stroke="#707070" stroke-width="2.4" fill="none"/></svg>

</body></html>
